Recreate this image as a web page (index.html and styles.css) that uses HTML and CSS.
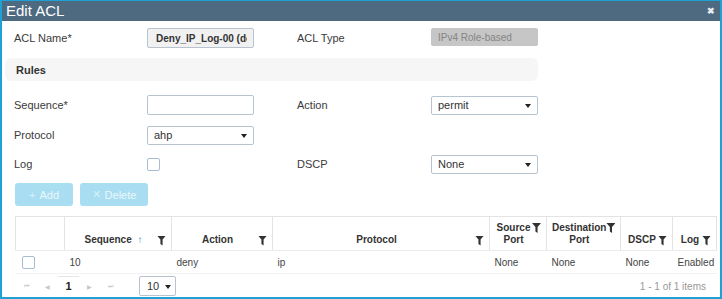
FILE: index.html
```html
<!DOCTYPE html>
<html lang="en">
<head>
  <meta charset="UTF-8" />
  <title>Edit ACL</title>
  <link rel="stylesheet" href="styles.css">
</head>
<body>

<div class="modal">
  <div class="modal-header">
    <span class="modal-title">Edit ACL</span>
    <span class="modal-close">&#10006;</span>
  </div>

  <div class="modal-body">
    <!-- ACL form -->
    <div class="form-grid">
      <label class="form-label" for="acl-name">ACL Name*</label>
      <input class="field field-readonly" id="acl-name" type="text" readonly value="Deny_IP_Log-00 (downloadable)">
      <label class="form-label">ACL Type</label>
      <div class="field field-disabled">IPv4 Role-based</div>
    </div>

    <div class="section-bar">Rules</div>

    <div class="form-grid rules-grid">
      <label class="form-label" for="seq">Sequence*</label>
      <input class="field field-input" id="seq" type="text">
      <label class="form-label">Action</label>
      <div class="field field-select">permit <span class="caret"></span></div>

      <label class="form-label">Protocol</label>
      <div class="field field-select">ahp <span class="caret"></span></div>
      <span></span>
      <span></span>

      <label class="form-label">Log</label>
      <div><span class="checkbox"></span></div>
      <label class="form-label">DSCP</label>
      <div class="field field-select">None <span class="caret"></span></div>
    </div>

    <div class="btn-row">
      <button class="btn-light btn-add"><span class="btn-icon">+</span> Add</button>
      <button class="btn-light btn-delete"><span class="btn-icon">&#10005;</span> Delete</button>
    </div>

    <!-- Rules grid -->
    <div class="grid">
      <table class="grid-table">
        <colgroup>
          <col style="width: 49px">
          <col style="width: 107px">
          <col style="width: 101px">
          <col style="width: 217px">
          <col style="width: 57px">
          <col style="width: 74px">
          <col style="width: 52px">
          <col style="width: 44px">
        </colgroup>
        <thead>
          <tr>
            <th></th>
            <th><div class="th-inner"><span class="th-text">Sequence <span class="sort">&#8593;</span></span><span class="filter"></span></div></th>
            <th><div class="th-inner"><span class="th-text">Action</span><span class="filter"></span></div></th>
            <th><div class="th-inner"><span class="th-text">Protocol</span><span class="filter"></span></div></th>
            <th><div class="th-inner two-line"><span class="th-text">Source<br>Port</span><span class="filter"></span></div></th>
            <th><div class="th-inner two-line"><span class="th-text">Destination<br>Port</span><span class="filter"></span></div></th>
            <th><div class="th-inner"><span class="th-text">DSCP</span><span class="filter"></span></div></th>
            <th><div class="th-inner"><span class="th-text">Log</span><span class="filter"></span></div></th>
          </tr>
        </thead>
        <tbody>
          <tr>
            <td class="td-check"><span class="checkbox checkbox-row"></span></td>
            <td>10</td>
            <td>deny</td>
            <td>ip</td>
            <td>None</td>
            <td>None</td>
            <td>None</td>
            <td>Enabled</td>
          </tr>
        </tbody>
      </table>

      <div class="pager">
        <div class="pager-nav">
          <span class="pager-arrow">&#9198;</span>
          <span class="pager-arrow">&#9664;</span>
          <span class="pager-page">1</span>
          <span class="pager-arrow">&#9654;</span>
          <span class="pager-arrow">&#9197;</span>
        </div>
        <div class="page-size">10 <span class="caret"></span></div>
        <div class="pager-info">1 - 1 of 1 items</div>
      </div>
    </div>
  </div>
</div>

</body>
</html>
```

FILE: styles.css
```css
:root {
  --frame-color: #1ea2d6;
  --header-color: #4d6a80;
  --text-color: #333;
  --border-color: #e3e3e3;
  --field-border: #b7c3cf;
}

body {
  margin: 0;
  font-family: "Liberation Sans", Arial, sans-serif;
  font-size: 11px;
  color: var(--text-color);
  background: #fff;
}

.modal {
  width: 722px;
  height: 299px;
  box-sizing: border-box;
  border: 2px solid var(--frame-color);
  border-top-width: 1px;
  background: #fff;
  overflow: hidden;
}

.modal-header {
  height: 20px;
  background: var(--header-color);
  display: flex;
  align-items: center;
  justify-content: space-between;
  padding: 0 5px 0 4px;
  color: #fff;
}

.modal-title {
  font-size: 15px;
  line-height: 20px;
}

.modal-close {
  font-size: 9px;
  color: #e8eef2;
  font-weight: bold;
}

.modal-body {
  padding-top: 7px;
}

.form-grid {
  display: grid;
  grid-template-columns: 133px 150px 134px 107px;
  align-items: center;
  padding-left: 12px;
}

.form-label {
  color: #3a3a3a;
}

.field {
  box-sizing: border-box;
  width: 107px;
  height: 20px;
  margin: 0;
  border: 1px solid var(--field-border);
  border-radius: 2px;
  padding: 0 6px;
  display: flex;
  align-items: center;
  overflow: hidden;
  white-space: nowrap;
  font-family: inherit;
  font-size: 11px;
  color: var(--text-color);
  background: #fff;
  outline: none;
}

.field-readonly {
  background: #f1f1f1;
  font-weight: bold;
  font-size: 10px;
  padding-left: 8px;
}

.field-disabled {
  height: 18px;
  background: #c6c6c6;
  border-color: #c6c6c6;
  color: #858585;
  font-size: 10px;
  margin-top: -2px;
}

.field-select {
  height: 19px;
  justify-content: space-between;
}

.caret {
  width: 0;
  height: 0;
  border-left: 3px solid transparent;
  border-right: 3px solid transparent;
  border-top: 4px solid #222;
  margin-top: 2px;
}

.section-bar {
  width: 533px;
  height: 23px;
  margin: 10px 0 0 3px;
  background: #f6f6f6;
  border-radius: 6px;
  padding-left: 11px;
  box-sizing: border-box;
  display: flex;
  align-items: center;
  font-weight: bold;
  font-size: 11px;
}

.rules-grid {
  grid-template-rows: 20px 18px 18px;
  row-gap: 11px;
  margin-top: 14px;
}

.checkbox {
  display: block;
  width: 11px;
  height: 11px;
  border: 1px solid #a9bdd0;
  border-radius: 2px;
  background: #fff;
}

.btn-row {
  display: flex;
  gap: 7px;
  padding-left: 13px;
  margin-top: 10px;
}

.btn-light {
  height: 23px;
  border: none;
  border-radius: 3px;
  background: #a9def2;
  color: #e9f7fc;
  font-family: inherit;
  font-size: 11px;
  padding: 0;
  display: flex;
  align-items: center;
  justify-content: center;
  gap: 4px;
}

.btn-add {
  width: 58px;
}

.btn-delete {
  width: 68px;
}

.btn-icon {
  font-size: 11px;
  color: #d4f0fa;
}

.grid {
  margin: 10px 0 0 13px;
  width: 701px;
}

.grid-table {
  width: 701px;
  table-layout: fixed;
  border-collapse: collapse;
}

.grid-table th {
  height: 29px;
  border: 1px solid var(--border-color);
  border-bottom-color: #eaeaea;
  padding: 0 5px 4px;
  vertical-align: bottom;
  font-weight: bold;
  font-size: 10px;
  color: #333;
}

.th-inner {
  display: flex;
  align-items: center;
  justify-content: space-between;
}

.th-inner.two-line {
  align-items: flex-start;
}

.th-text {
  flex: 1;
  text-align: center;
  line-height: 12px;
}

.sort {
  color: #2a7fd0;
  font-weight: normal;
  margin-left: 3px;
}

.filter {
  width: 9px;
  height: 10px;
  background: #333;
  clip-path: polygon(0 0, 100% 0, 62% 40%, 62% 100%, 38% 85%, 38% 40%);
  flex-shrink: 0;
  margin-top: 1px;
}

.grid-table td {
  height: 22px;
  padding: 0 5px;
  font-size: 10px;
  color: #444;
  border-bottom: 1px solid #f2f2f2;
  white-space: nowrap;
}

.td-check {
  padding-left: 6px !important;
}

.pager {
  display: flex;
  align-items: center;
  height: 24px;
}

.pager-nav {
  display: flex;
  align-items: center;
  padding-left: 1px;
  width: 106px;
  margin-right: 17px;
}

.pager-arrow {
  width: 21px;
  text-align: center;
  color: #c6c6c6;
  font-size: 6px;
}

.pager-page {
  width: 21px;
  text-align: center;
  font-weight: bold;
  font-size: 11px;
  color: #222;
  border-top: 1px solid #e6e6e6;
  padding-top: 3px;
  margin-top: -4px;
}

.page-size {
  box-sizing: border-box;
  width: 37px;
  height: 20px;
  border: 1px solid var(--field-border);
  border-radius: 2px;
  display: flex;
  align-items: center;
  gap: 6px;
  padding-left: 7px;
  font-size: 11px;
}

.pager-info {
  margin-left: auto;
  padding-right: 10px;
  color: #999;
  font-size: 10px;
}
```
